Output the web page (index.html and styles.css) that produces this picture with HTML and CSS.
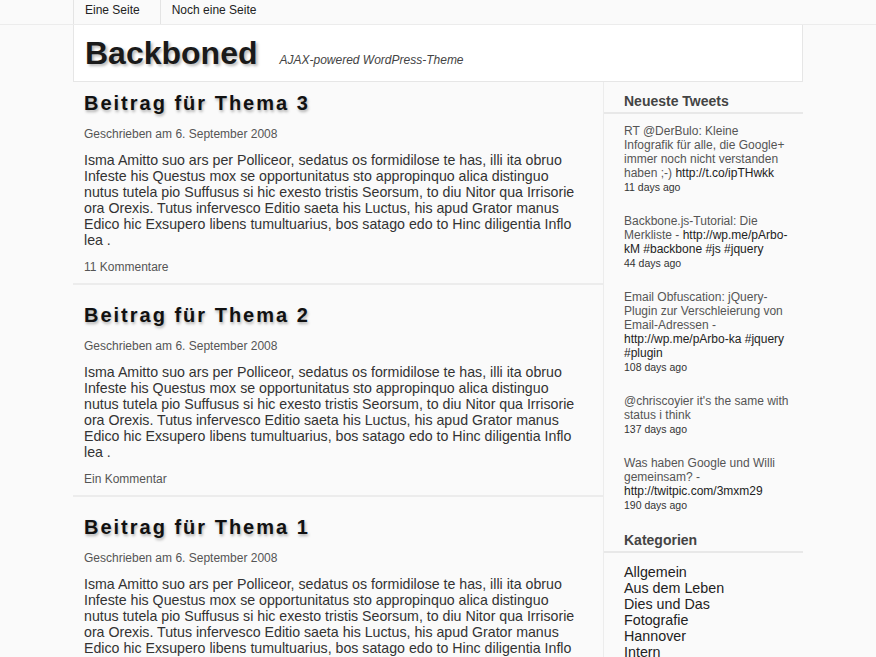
FILE: index.html
```html
<!DOCTYPE html>
<html lang="de">
<head>
<meta charset="utf-8">
<title>Backboned</title>
<link rel="stylesheet" href="styles.css">
</head>
<body>
<div class="topbar">
  <nav class="nav wrap">
    <a class="nav-item" href="#">Eine Seite</a>
    <a class="nav-item" href="#">Noch eine Seite</a>
  </nav>
</div>
<div class="wrap">
  <header class="masthead">
    <h1 class="site-title">Backboned</h1>
    <span class="tagline">AJAX-powered WordPress-Theme</span>
  </header>
  <div class="layout">
    <main class="main">
      <article class="post">
        <h2 class="post-title">Beitrag für Thema 3</h2>
        <p class="meta">Geschrieben am 6. September 2008</p>
        <p class="body">Isma Amitto suo ars per Polliceor, sedatus os formidilose te has, illi ita obruo Infeste his Questus mox se opportunitatus sto appropinquo alica distinguo nutus tutela pio Suffusus si hic exesto tristis Seorsum, to diu Nitor qua Irrisorie ora Orexis. Tutus infervesco Editio saeta his Luctus, his apud Grator manus Edico hic Exsupero libens tumultuarius, bos satago edo to Hinc diligentia Inflo lea .</p>
        <p class="comments">11 Kommentare</p>
      </article>
      <article class="post">
        <h2 class="post-title">Beitrag für Thema 2</h2>
        <p class="meta">Geschrieben am 6. September 2008</p>
        <p class="body">Isma Amitto suo ars per Polliceor, sedatus os formidilose te has, illi ita obruo Infeste his Questus mox se opportunitatus sto appropinquo alica distinguo nutus tutela pio Suffusus si hic exesto tristis Seorsum, to diu Nitor qua Irrisorie ora Orexis. Tutus infervesco Editio saeta his Luctus, his apud Grator manus Edico hic Exsupero libens tumultuarius, bos satago edo to Hinc diligentia Inflo lea .</p>
        <p class="comments">Ein Kommentar</p>
      </article>
      <article class="post">
        <h2 class="post-title">Beitrag für Thema 1</h2>
        <p class="meta">Geschrieben am 6. September 2008</p>
        <p class="body">Isma Amitto suo ars per Polliceor, sedatus os formidilose te has, illi ita obruo Infeste his Questus mox se opportunitatus sto appropinquo alica distinguo nutus tutela pio Suffusus si hic exesto tristis Seorsum, to diu Nitor qua Irrisorie ora Orexis. Tutus infervesco Editio saeta his Luctus, his apud Grator manus Edico hic Exsupero libens tumultuarius, bos satago edo to Hinc diligentia Inflo lea .</p>
        <p class="comments">Ein Kommentar</p>
      </article>
    </main>
    <aside class="sidebar">
      <section class="widget">
        <h3 class="widget-title">Neueste Tweets</h3>
        <ul class="tweets">
          <li class="tweet"><span class="tweet-text">RT @DerBulo: Kleine Infografik für alle, die Google+ immer noch nicht verstanden haben ;-) <a href="#">http://t.co/ipTHwkk</a></span><span class="ago">11 days ago</span></li>
          <li class="tweet"><span class="tweet-text">Backbone.js-Tutorial: Die Merkliste - <a href="#">http://wp.me/pArbo-kM</a> <a href="#">#backbone</a> <a href="#">#js</a> <a href="#">#jquery</a></span><span class="ago">44 days ago</span></li>
          <li class="tweet"><span class="tweet-text">Email Obfuscation: jQuery-Plugin zur Verschleierung von Email-Adressen - <a href="#">http://wp.me/pArbo-ka</a> <a href="#">#jquery</a> <a href="#">#plugin</a></span><span class="ago">108 days ago</span></li>
          <li class="tweet"><span class="tweet-text">@chriscoyier it's the same with status i think</span><span class="ago">137 days ago</span></li>
          <li class="tweet"><span class="tweet-text">Was haben Google und Willi gemeinsam? - <a href="#">http://twitpic.com/3mxm29</a></span><span class="ago">190 days ago</span></li>
        </ul>
      </section>
      <section class="widget">
        <h3 class="widget-title">Kategorien</h3>
        <ul class="cats">
          <li><a href="#">Allgemein</a></li>
          <li><a href="#">Aus dem Leben</a></li>
          <li><a href="#">Dies und Das</a></li>
          <li><a href="#">Fotografie</a></li>
          <li><a href="#">Hannover</a></li>
          <li><a href="#">Intern</a></li>
        </ul>
      </section>
    </aside>
  </div>
</div>
</body>
</html>
```
FILE: styles.css
```css
* { box-sizing: border-box; }
html, body { margin: 0; padding: 0; }
body {
  background: #fafafa;
  font-family: "Liberation Sans", Arial, Helvetica, sans-serif;
  color: #333;
}
a { text-decoration: none; color: inherit; }
.wrap { width: 730px; margin: 0 auto; }

.topbar { border-bottom: 1px solid #ececec; }
.nav { display: flex; height: 24px; }
.nav-item {
  display: block;
  font-size: 12px;
  line-height: 20px;
  color: #222;
  padding: 0 20px 0 11px;
  border-left: 1px solid #e4e4e4;
}

.masthead {
  background: #fff;
  border: 1px solid #e6e6e6;
  border-top: 0;
  height: 57px;
  display: flex;
  align-items: baseline;
  padding: 12px 11px 0;
}
.site-title {
  margin: 0;
  font-size: 32px;
  line-height: 32px;
  font-weight: bold;
  color: #1a1a1a;
  text-shadow: 2px 2px 3px rgba(0,0,0,0.28);
}
.tagline {
  margin-left: 22px;
  font-size: 12px;
  font-style: italic;
  color: #444;
}

.layout { display: flex; }
.main { width: 530px; }
.post {
  padding: 18px 28px 9px 11px;
  border-bottom: 2px solid #ececec;
}
.post:first-child { padding-top: 9px; }
.post-title {
  margin: 0;
  font-size: 20px;
  line-height: 24px;
  font-weight: bold;
  letter-spacing: 2px;
  color: #111;
  text-shadow: 1px 2px 3px rgba(0,0,0,0.3);
}
.meta {
  margin: 12px 0 0;
  font-size: 12px;
  line-height: 14px;
  color: #555;
}
.body {
  margin: 11px 0 0;
  font-size: 14.2px;
  line-height: 16px;
  color: #333;
}
.comments {
  margin: 12px 0 0;
  font-size: 12px;
  line-height: 14px;
  color: #555;
}

.sidebar {
  width: 200px;
  border-left: 1px solid #ececec;
}
.widget + .widget { margin-top: 9px; }
.widget-title {
  margin: 0;
  padding: 11px 20px 3px;
  font-size: 14px;
  line-height: 16px;
  font-weight: bold;
  color: #444;
  border-bottom: 2px solid #e8e8e8;
}
.tweets, .cats { list-style: none; margin: 0; padding: 0 13px 0 20px; }
.tweets { padding-top: 10px; }
.tweet { margin-bottom: 20px; }
.tweet:last-child { margin-bottom: 0; }
.tweet-text {
  display: block;
  font-size: 12px;
  line-height: 14px;
  color: #555;
}
.tweet-text a { color: #222; }
.ago {
  display: block;
  font-size: 10.5px;
  line-height: 14px;
  color: #333;
}
.cats { padding-top: 11px; }
.cats li { font-size: 14.3px; line-height: 16px; color: #222; }
```
